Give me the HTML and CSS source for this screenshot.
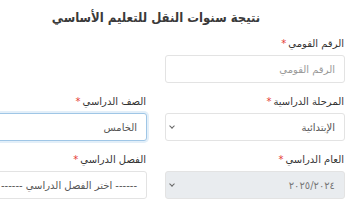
FILE: index.html
```html
<!DOCTYPE html>
<html lang="ar" dir="rtl">
<head>
<meta charset="utf-8">
<link rel="stylesheet" href="styles.css">
</head>
<body>
<div class="page">
  <h1 class="title">نتيجة سنوات النقل للتعليم الأساسي</h1>
  <div class="form">
    <div class="field">
      <label class="label">الرقم القومي<span class="req">*</span></label>
      <div class="control"><span class="placeholder">الرقم القومي</span></div>
    </div>
    <div class="field"></div>
    <div class="field">
      <label class="label">المرحلة الدراسية<span class="req">*</span></label>
      <div class="control select"><span class="value">الإبتدائية</span><span class="chev"></span></div>
    </div>
    <div class="field">
      <label class="label">الصف الدراسي<span class="req">*</span></label>
      <div class="control focus"><span class="value">الخامس</span></div>
    </div>
    <div class="field">
      <label class="label">العام الدراسي<span class="req">*</span></label>
      <div class="control select disabled"><span class="value muted">٢٠٢٥/٢٠٢٤</span><span class="chev"></span></div>
    </div>
    <div class="field">
      <label class="label">الفصل الدراسي<span class="req">*</span></label>
      <div class="control select"><span class="value">------ اختر الفصل الدراسي ------</span><span class="chev"></span></div>
    </div>
  </div>
</div>
</body>
</html>
```
FILE: styles.css
```css
html, body {
  margin: 0;
  padding: 0;
  overflow: hidden;
  background: #fff;
}
body {
  direction: rtl;
  font-family: "DejaVu Sans", "Noto Sans", sans-serif;
  color: #333;
}
.page {
  width: 378px;
  margin-right: 15px;
  padding-top: 6px;
}
.title {
  margin: 0 0 7px;
  font-family: "DejaVu Sans Condensed", "DejaVu Sans", sans-serif;
  font-size: 13px;
  line-height: 24px;
  font-weight: bold;
  text-align: center;
  color: #3a3a3a;
}
.form {
  display: grid;
  grid-template-columns: 180px 180px;
  column-gap: 18px;
  row-gap: 12px;
}
.field {
  display: flex;
  flex-direction: column;
  gap: 4px;
}
.label {
  font-size: 10px;
  line-height: 14px;
  color: #333;
  padding-right: 1px;
}
.req {
  color: #e53935;
  margin-right: 2px;
}
.control {
  height: 28px;
  box-sizing: border-box;
  border: 1px solid #e3e3e3;
  border-radius: 3px;
  display: flex;
  align-items: center;
  padding: 0 9px;
  font-size: 10px;
  color: #555;
  background: #fff;
}
.placeholder {
  color: #9a9a9a;
}
.select .value {
  flex: 1;
}
.muted {
  color: #777;
}
.disabled {
  background: #e9ecef;
}
.focus {
  border-color: #9fc6e6;
  box-shadow: 0 0 0 2px #e3eff9;
}
.chev {
  width: 3px;
  height: 3px;
  border-right: 1px solid #666;
  border-bottom: 1px solid #666;
  transform: rotate(45deg);
  margin-left: -5px;
  margin-top: -2px;
}
```
